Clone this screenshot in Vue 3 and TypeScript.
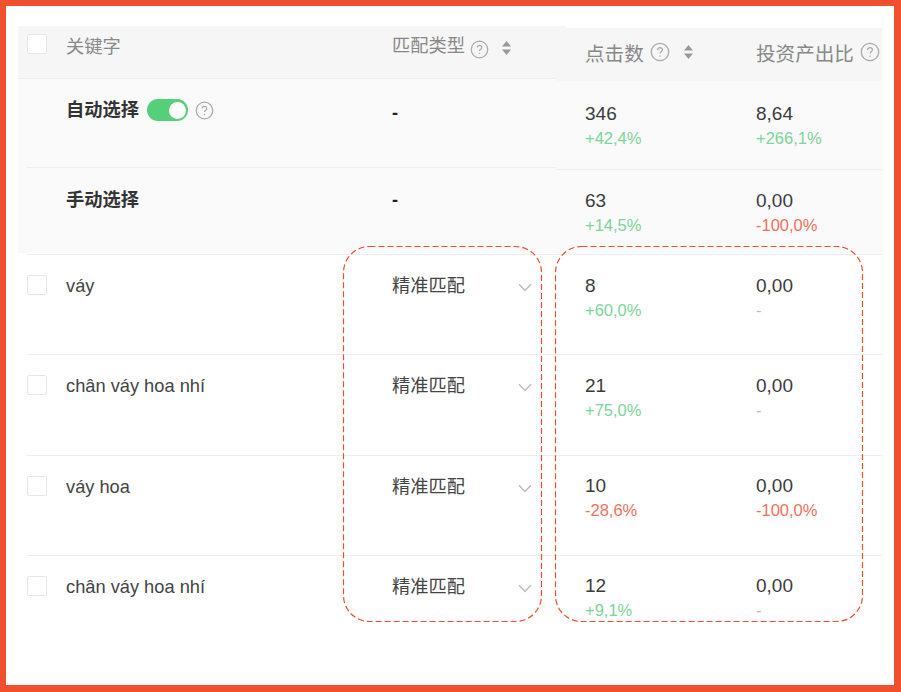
<script setup lang="ts">
interface Metric { value: string; delta: string; tone: 'up' | 'down' | 'none' }
interface Row { keyword: string; clicks: Metric; roi: Metric }

const rows: Row[] = [
  { keyword: 'váy', clicks: { value: '8', delta: '+60,0%', tone: 'up' }, roi: { value: '0,00', delta: '-', tone: 'none' } },
  { keyword: 'chân váy hoa nhí', clicks: { value: '21', delta: '+75,0%', tone: 'up' }, roi: { value: '0,00', delta: '-', tone: 'none' } },
  { keyword: 'váy hoa', clicks: { value: '10', delta: '-28,6%', tone: 'down' }, roi: { value: '0,00', delta: '-100,0%', tone: 'down' } },
  { keyword: 'chân váy hoa nhí', clicks: { value: '12', delta: '+9,1%', tone: 'up' }, roi: { value: '0,00', delta: '-', tone: 'none' } },
]

const summary = [
  { label: '自动选择', toggle: true, clicks: { value: '346', delta: '+42,4%', tone: 'up' }, roi: { value: '8,64', delta: '+266,1%', tone: 'up' } },
  { label: '手动选择', toggle: false, clicks: { value: '63', delta: '+14,5%', tone: 'up' }, roi: { value: '0,00', delta: '-100,0%', tone: 'down' } },
]
</script>

<template>
  <div class="frame">
    <div class="top">
      <section class="top-left">
        <div class="head head-left">
          <span class="check"></span>
          <span class="kw-title">关键字</span>
          <span class="match-title">匹配类型</span>
          <svg class="help head-help" viewBox="0 0 20 20"><circle cx="10" cy="10" r="8.7" /><path d="M7.6 7.9c0-1.4 1.1-2.3 2.4-2.3s2.4.9 2.4 2.2c0 1.9-2.4 1.9-2.4 3.8" /><path d="M10 13.6v1.2" /></svg>
          <svg class="sort" viewBox="0 0 9 14"><path d="M4.5 0 9 5.4H0z" /><path d="M0 8.6h9L4.5 14z" /></svg>
        </div>
        <div v-for="(s, i) in summary" :key="s.label" class="sum-left" :class="{ ruled: i > 0 }">
          <div class="sum-label">
            <strong>{{ s.label }}</strong>
            <template v-if="s.toggle">
              <span class="toggle"><span class="knob"></span></span>
              <svg class="help sum-help" viewBox="0 0 20 20"><circle cx="10" cy="10" r="8.7" /><path d="M7.6 7.9c0-1.4 1.1-2.3 2.4-2.3s2.4.9 2.4 2.2c0 1.9-2.4 1.9-2.4 3.8" /><path d="M10 13.6v1.2" /></svg>
            </template>
          </div>
          <strong class="sum-dash">-</strong>
        </div>
      </section>
      <section class="top-right">
        <div class="head head-right">
          <div class="col-clicks title-wrap">
            <span>点击数</span>
            <svg class="help" viewBox="0 0 20 20"><circle cx="10" cy="10" r="8.7" /><path d="M7.6 7.9c0-1.4 1.1-2.3 2.4-2.3s2.4.9 2.4 2.2c0 1.9-2.4 1.9-2.4 3.8" /><path d="M10 13.6v1.2" /></svg>
            <svg class="sort" viewBox="0 0 9 14"><path d="M4.5 0 9 5.4H0z" /><path d="M0 8.6h9L4.5 14z" /></svg>
          </div>
          <div class="col-roi title-wrap">
            <span>投资产出比</span>
            <svg class="help" viewBox="0 0 20 20"><circle cx="10" cy="10" r="8.7" /><path d="M7.6 7.9c0-1.4 1.1-2.3 2.4-2.3s2.4.9 2.4 2.2c0 1.9-2.4 1.9-2.4 3.8" /><path d="M10 13.6v1.2" /></svg>
          </div>
        </div>
        <div v-for="(s, i) in summary" :key="s.label" class="sum-right" :class="{ ruled: i > 0 }">
          <div class="col-clicks">
            <div class="value">{{ s.clicks.value }}</div>
            <div class="delta" :class="s.clicks.tone">{{ s.clicks.delta }}</div>
          </div>
          <div class="col-roi">
            <div class="value">{{ s.roi.value }}</div>
            <div class="delta" :class="s.roi.tone">{{ s.roi.delta }}</div>
          </div>
        </div>
      </section>
    </div>

    <div class="rows">
      <div v-for="(r, i) in rows" :key="i" class="row">
        <span class="check"></span>
        <span class="kw">{{ r.keyword }}</span>
        <div class="match">
          <span>精准匹配</span>
          <svg class="chev" viewBox="0 0 14 9"><path d="M1 1.2 7 7.4l6-6.2" /></svg>
        </div>
        <div class="col-clicks metric">
          <div class="value">{{ r.clicks.value }}</div>
          <div class="delta" :class="r.clicks.tone">{{ r.clicks.delta }}</div>
        </div>
        <div class="col-roi metric">
          <div class="value">{{ r.roi.value }}</div>
          <div class="delta" :class="r.roi.tone">{{ r.roi.delta }}</div>
        </div>
      </div>
    </div>

    <svg class="marks" width="901" height="692" viewBox="0 0 901 692">
      <rect x="343.5" y="246.5" width="198" height="375" rx="26" />
      <rect x="555.5" y="246.5" width="307" height="375" rx="26" />
    </svg>
  </div>
</template>

<style scoped>
.frame {
  position: relative;
  box-sizing: border-box;
  width: 901px;
  height: 692px;
  padding: 20px 0 0 12px;
  border: solid #f0502d;
  border-width: 6px 7px 7px 6px;
  background: #fff;
  overflow: hidden;
  color: #333;
  font-family: "Liberation Sans", "Noto Sans CJK SC", sans-serif;
  font-size: 18.25px;
}
.top { display: flex; width: 864px; }
.top-left { width: 538px; flex: none; background: #fafafa; height: 227px; }
.top-right { width: 326px; flex: none; margin-top: 2px; height: 226px; background: #fafafa; }
.head { display: flex; background: #f6f6f6; color: #888; box-sizing: border-box; border-bottom: 1px solid #eee; }
.head-left { position: relative; width: 548px; height: 53px; padding: 8px 0 0 9px; align-items: flex-start; }
.head-right { height: 53px; padding-top: 13px; box-sizing: border-box; border-bottom: 0; padding-left: 29px; position: relative; font-size: 19.6px; }
.kw-title { margin: 2px 0 0 19px; width: 326px; line-height: 22px; flex: none; }
.match-title { line-height: 22px; margin-top: 1px; }
.head-help { margin: 6px 0 0 5px; }
.head-left .sort { margin: 7px 0 0 13px; }
.check {
  flex: none;
  box-sizing: border-box;
  width: 20px;
  height: 20px;
  border: 1px solid #e6e6e6;
  border-radius: 2px;
  background: #fff;
}
.help { flex: none; width: 19px; height: 19px; fill: none; stroke: #aaa; stroke-width: 1.3; }
.sum-help { margin-top: 2px; }
.sort { flex: none; width: 9px; height: 14px; fill: #999; }
.title-wrap { display: flex; align-items: center; height: 22px; }
.title-wrap .help { margin-left: 6px; width: 20px; height: 20px; }
.title-wrap .sort { margin-left: 14px; }
.col-clicks { flex: none; width: 171px; }
.col-roi { flex: none; width: 126px; }
.metric { margin-top: -0.5px; }
.sum-left { display: flex; height: 88px; margin-left: 9px; box-sizing: border-box; padding-top: 20px; }
.sum-left.ruled { height: 86px; border-top: 1px solid #eee; padding-top: 21px; }
.sum-label { width: 365px; padding-left: 39px; box-sizing: border-box; display: flex; align-items: flex-start; flex: none; }
.sum-label strong { line-height: 22px; color: #333; }
.sum-dash { line-height: 28px; color: #222; }
.ruled .sum-dash { margin-top: -3px; }
.toggle {
  width: 41px;
  height: 22px;
  margin: 0 7px 0 8px;
  border-radius: 11px;
  background: #55cf78;
  display: flex;
  justify-content: flex-end;
  align-items: center;
  padding-right: 2px;
  box-sizing: border-box;
}
.knob { width: 17px; height: 17px; border-radius: 50%; background: #fff; }
.sum-right { display: flex; height: 88px; padding: 22px 0 0 29px; box-sizing: border-box; }
.sum-right.ruled { height: 85px; border-top: 1px solid #eee; padding-top: 20px; }
.rows { width: 855px; margin-left: 9px; margin-top: 0; }
.row {
  display: flex;
  height: 100.3px;
  box-sizing: border-box;
  border-top: 1px solid #eee;
  padding-top: 20px;
  align-items: flex-start;
}
.kw { flex: none; width: 326px; margin-left: 19px; line-height: 22px; color: #444; }
.match { flex: none; width: 193px; display: flex; line-height: 22px; color: #444; }
.chev { width: 14px; height: 9px; margin: 8px 0 0 53px; fill: none; stroke: #bbb; stroke-width: 1.4; }
.value { font-size: 19px; line-height: 22px; color: #3c3c3c; }
.delta { font-size: 16.5px; line-height: 20px; margin-top: 3px; }
.up { color: #7dd598; }
.down { color: #f2705d; }
.none { color: #bbb; }
.marks { position: absolute; left: -6px; top: -6px; pointer-events: none; }
.marks rect { fill: none; stroke: #ee4f2c; stroke-width: 1.2; stroke-dasharray: 6 3; }
</style>
